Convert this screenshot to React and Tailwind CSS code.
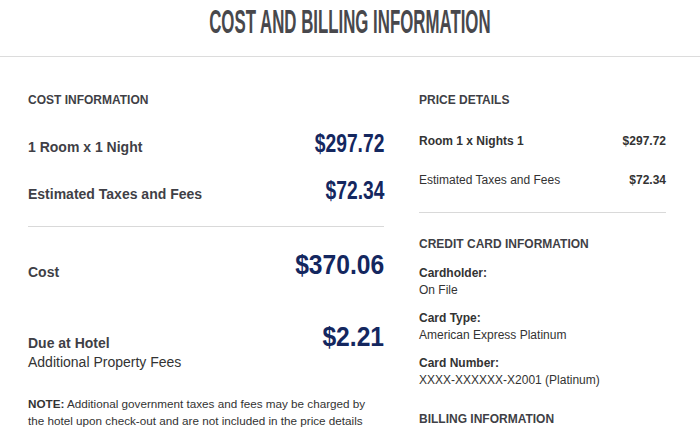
import React from "react";

const sans = { fontFamily: '"Liberation Sans", Arial, sans-serif' };

function Price({ children, big }) {
  return (
    <span
      className={`inline-block origin-right font-bold text-[#14275f] ${
        big ? "text-[28px] leading-[32px] scale-x-[0.88]" : "text-[25px] leading-[30px] scale-x-[0.77]"
      }`}
    >
      {children}
    </span>
  );
}

function Field({ label, value, className = "" }) {
  return (
    <div className={`flex flex-col ${className}`}>
      <span className="text-[12px] leading-[17px] font-bold text-[#333]">{label}</span>
      <span className="text-[12px] leading-[16px] text-[#333]">{value}</span>
    </div>
  );
}

export default function App() {
  return (
    <div className="w-[700px] h-[427px] bg-white overflow-hidden" style={sans}>
      <header className="h-[57px] border-b border-[#dcdcdc] flex justify-center pt-[2px]">
        <h1 className="text-[33px] leading-[40px] font-bold text-[#48484c] scale-x-[0.51] whitespace-nowrap">
          COST AND BILLING INFORMATION
        </h1>
      </header>

      <div className="flex pl-[28px] pr-[34px] pt-[36px]">
        <section className="w-[356px]">
          <h2 className="text-[12px] font-bold text-[#3f3f46] leading-[14px]">COST INFORMATION</h2>

          <div className="mt-[21px] flex items-baseline justify-between">
            <span className="text-[14px] font-bold text-[#3f3f46]">1 Room x 1 Night</span>
            <Price>$297.72</Price>
          </div>
          <div className="mt-[17px] flex items-baseline justify-between">
            <span className="text-[14px] font-bold text-[#3f3f46]">Estimated Taxes and Fees</span>
            <Price>$72.34</Price>
          </div>

          <div className="border-t border-[#d9d9d9] mt-[21px]" />

          <div className="mt-[22px] flex items-start justify-between">
            <span className="mt-[15px] text-[14px] leading-[16px] font-bold text-[#3f3f46]">Cost</span>
            <Price big>$370.06</Price>
          </div>

          <div className="mt-[40px] flex items-start justify-between">
            <div className="mt-[14px] flex flex-col">
              <span className="text-[14px] leading-[17px] font-bold text-[#3f3f46]">Due at Hotel</span>
              <span className="text-[14px] leading-[20px] text-[#333]">Additional Property Fees</span>
            </div>
            <Price big>$2.21</Price>
          </div>

          <p className="mt-[23px] w-[350px] text-[11.7px] leading-[17px] text-[#333]">
            <b>NOTE:</b> Additional government taxes and fees may be charged by the hotel upon check-out and are not
            included in the price details
          </p>
        </section>

        <section className="ml-[35px] flex-1">
          <h2 className="text-[12px] font-bold text-[#3f3f46] leading-[14px]">PRICE DETAILS</h2>
          <div className="mt-[27px] flex justify-between items-baseline leading-[14px]">
            <span className="text-[12px] font-bold text-[#333]">Room 1 x Nights 1</span>
            <span className="text-[12px] font-bold text-[#333]">$297.72</span>
          </div>
          <div className="mt-[25px] flex justify-between items-baseline leading-[14px]">
            <span className="text-[12px] text-[#333]">Estimated Taxes and Fees</span>
            <span className="text-[12px] font-bold text-[#333]">$72.34</span>
          </div>

          <div className="border-t border-[#d9d9d9] mt-[25px]" />

          <h2 className="mt-[24px] text-[12px] font-bold text-[#3f3f46] leading-[14px]">CREDIT CARD INFORMATION</h2>
          <div className="mt-[14px] flex flex-col gap-[12px]">
            <Field label="Cardholder:" value="On File" />
            <Field label="Card Type:" value="American Express Platinum" />
            <Field label="Card Number:" value="XXXX-XXXXXX-X2001 (Platinum)" />
          </div>
          <h2 className="mt-[24px] text-[12px] font-bold text-[#3f3f46] leading-[14px]">BILLING INFORMATION</h2>
        </section>
      </div>
    </div>
  );
}
